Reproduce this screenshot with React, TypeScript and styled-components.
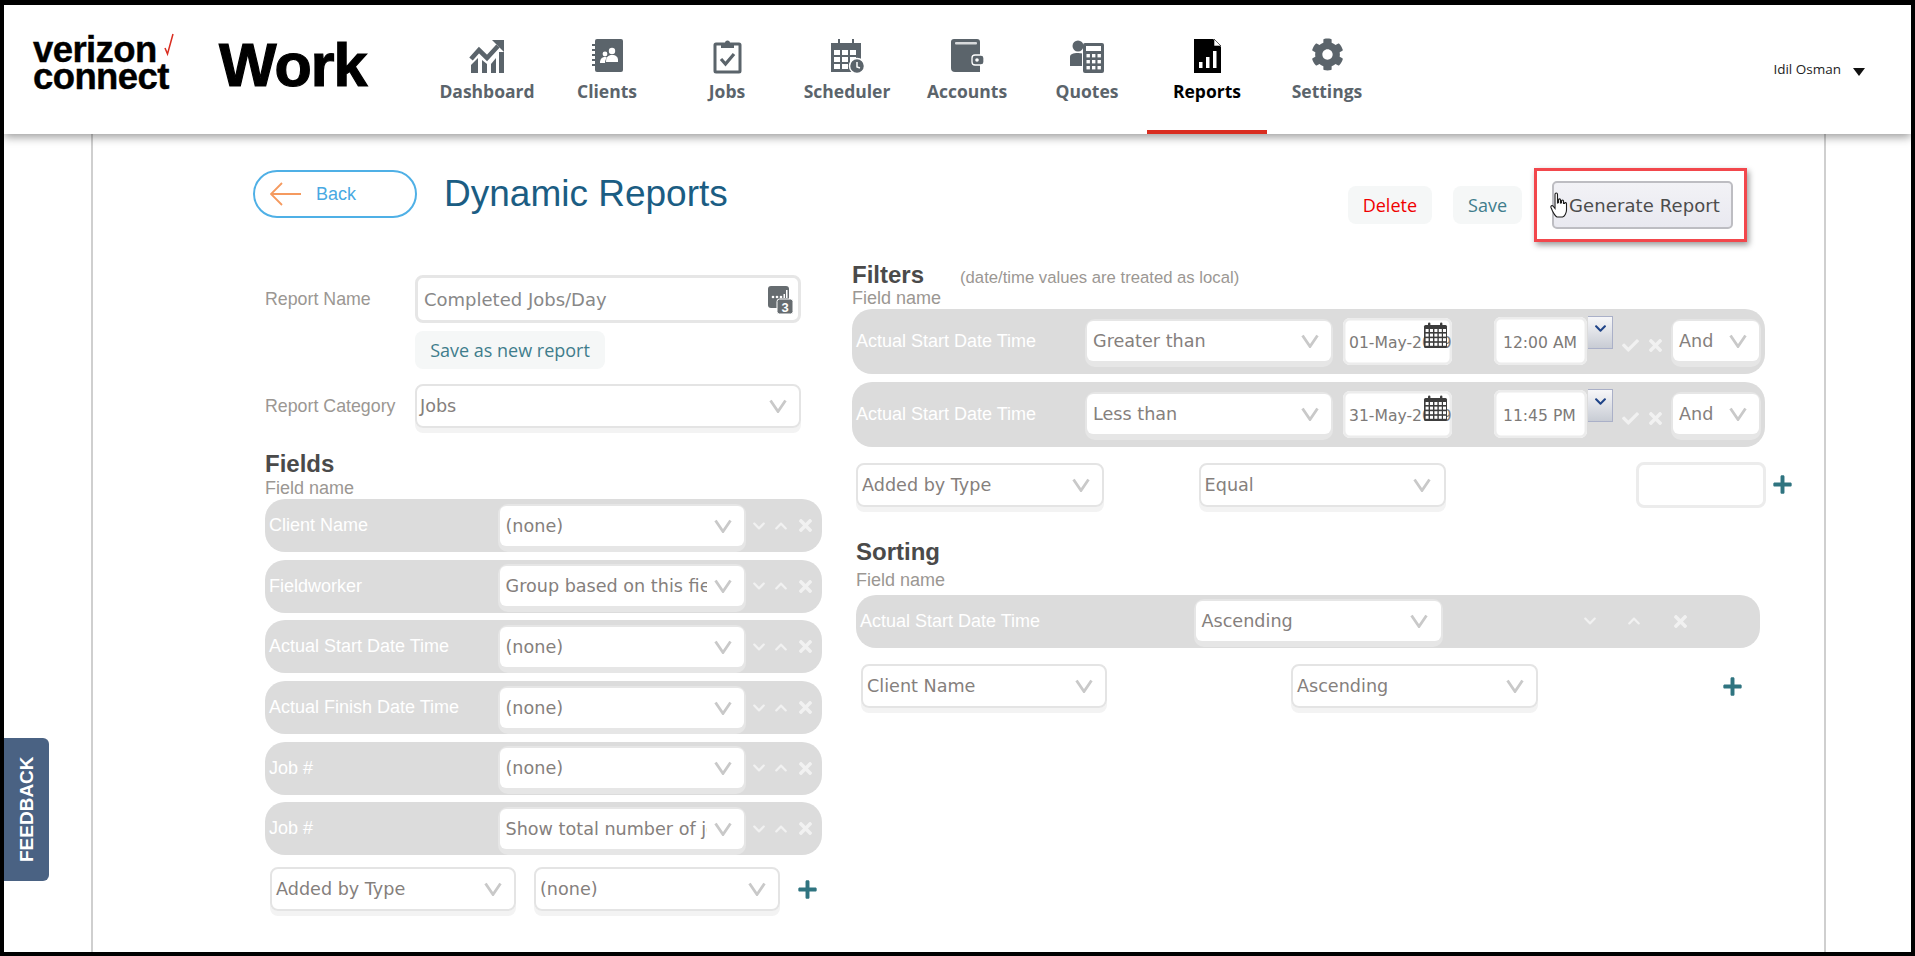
import React from "react";
import styled, { createGlobalStyle } from "styled-components";
import { FaCheck, FaChevronDown, FaChevronUp, FaCog, FaPlus, FaTimes } from "react-icons/fa";

const GlobalStyle = createGlobalStyle`
  html, body {
    margin: 0;
    padding: 0;
    background: #000;
  }
  * {
    box-sizing: border-box;
  }
`;

const SANS = `"Liberation Sans", Arial, sans-serif`;
const VERDANA = `"DejaVu Sans", Verdana, sans-serif`;
const OPEN = `"Open Sans", "Noto Sans", sans-serif`;

const Frame = styled.div`
  width: 1915px;
  height: 956px;
  padding: 5px 4px 4px;
  background: #000;
  display: flex;
  flex-direction: column;
  overflow: hidden;
  font-family: ${SANS};
`;

const Header = styled.header`
  position: relative;
  z-index: 2;
  height: 129px;
  flex: none;
  display: flex;
  padding-left: 29px;
  background: #fff;
  box-shadow: 0 3px 9px rgba(0, 0, 0, 0.4);
`;

const Logo = styled.div`
  width: 394px;
  flex: none;
  display: flex;
  align-items: flex-start;
  padding-top: 31px;
  color: #000;
`;

const BrandStack = styled.div`
  position: relative;
  width: 186px;
  font-size: 36.5px;
  font-weight: 700;
  line-height: 27px;
  letter-spacing: -0.6px;
  -webkit-text-stroke: 0.4px #000;
`;

const BrandCheck = styled.svg`
  position: absolute;
  left: 131px;
  top: -3px;
`;

const Work = styled.div`
  font-size: 61px;
  font-weight: 700;
  line-height: 58px;
  letter-spacing: -1px;
  -webkit-text-stroke: 1.2px #000;
`;

const Nav = styled.nav`
  display: flex;
`;

const NavItem = styled.a<{ $active?: boolean }>`
  width: 120px;
  height: 129px;
  display: flex;
  flex-direction: column;
  align-items: center;
  padding-top: 33px;
  border-bottom: 4px solid ${(p) => (p.$active ? "#d92d20" : "transparent")};
  color: ${(p) => (p.$active ? "#000" : "#5b646b")};
  font-family: ${OPEN};
  font-size: 17.5px;
  font-weight: 700;
  line-height: 24px;
`;

const NavIcon = styled.svg`
  width: 36px;
  height: 36px;
  margin-bottom: 5px;
  flex: none;
`;

const GearBox = styled.span`
  height: 36px;
  margin-bottom: 5px;
  font-size: 33px;
  line-height: 0;
`;

const UserMenu = styled.div`
  margin-left: auto;
  margin-right: 46px;
  padding-top: 54px;
  display: flex;
  align-items: flex-start;
  gap: 12px;
  font-family: ${OPEN};
  font-size: 13.5px;
  line-height: 20px;
  color: #222;
`;

const UserCaret = styled.span`
  width: 0;
  height: 0;
  margin-top: 9px;
  border-left: 6px solid transparent;
  border-right: 6px solid transparent;
  border-top: 8px solid #111;
`;

const Body = styled.main`
  position: relative;
  flex: 1;
  background: #fff;
  padding-left: 87px;
`;

const FeedbackTab = styled.div`
  position: absolute;
  left: 0;
  top: 604px;
  width: 45px;
  height: 143px;
  display: flex;
  align-items: center;
  justify-content: center;
  background: #4a6283;
  border-radius: 0 6px 6px 0;
  color: #fff;
  font-size: 19px;
  font-weight: 700;
  writing-mode: vertical-rl;
  transform: rotate(180deg);
  border-radius: 6px 0 0 6px;
`;

const Panel = styled.div`
  width: 1735px;
  height: 100%;
  border-left: 2px solid #cfcfcf;
  border-right: 2px solid #cfcfcf;
`;

const TopBar = styled.div`
  height: 108px;
  padding: 34px 77px 0 160px;
  display: flex;
  align-items: flex-start;
`;

const BackButton = styled.button`
  width: 164px;
  height: 48px;
  margin-top: 2px;
  padding: 0 0 0 15px;
  display: flex;
  align-items: center;
  gap: 15px;
  background: #fff;
  border: 2px solid #4fb0e6;
  border-radius: 24px;
  color: #48a9e2;
  font-family: ${SANS};
  font-size: 18px;
`;

const Title = styled.h1`
  margin: 0 0 0 27px;
  color: #1b5d83;
  font-size: 37px;
  font-weight: 400;
  line-height: 52px;
`;

const Actions = styled.div`
  margin-left: auto;
  display: flex;
  align-items: flex-start;
`;

const SoftButton = styled.button<{ $danger?: boolean }>`
  height: 38px;
  margin-top: 18px;
  margin-right: 21px;
  padding: 0 15px;
  border: 0;
  border-radius: 8px;
  background: #f5f7f7;
  color: ${(p) => (p.$danger ? "#f00000" : "#3f7d8c")};
  font-family: ${OPEN};
  font-size: 18px;
`;

const Highlight = styled.div`
  position: relative;
  width: 213px;
  height: 74px;
  margin-left: -9px;
  padding: 10px 0 0 15px;
  border: 3px solid #f2474c;
  box-shadow: 2px 3px 6px rgba(0, 0, 0, 0.4);
  background: #fff;
`;

const GenerateButton = styled.button`
  width: 181px;
  height: 48px;
  padding: 0 0 0 15px;
  text-align: left;
  border: 2px solid #bdbdc2;
  border-radius: 5px;
  background: linear-gradient(#f2f2f6, #e9e9f0);
  color: #4c4c4c;
  font-family: ${VERDANA};
  font-size: 18px;
  letter-spacing: 0.1px;
`;

const HandCursor = styled.svg`
  position: absolute;
  left: 13px;
  top: 21px;
`;

const Columns = styled.div`
  display: flex;
  padding-left: 172px;
  gap: 30px;
`;

const LeftColumn = styled.section`
  width: 557px;
  padding-top: 33px;
`;

const RightColumn = styled.section`
  width: 913px;
  padding-top: 18.6px;
`;

const FormRow = styled.div`
  display: flex;
  align-items: center;
`;

const FormLabel = styled.label`
  width: 150px;
  flex: none;
  color: #9b9793;
  font-size: 17.8px;
`;

const NameInput = styled.div`
  position: relative;
  width: 386px;
  height: 48px;
  padding-left: 6px;
  display: flex;
  align-items: center;
  border: 3px solid #e6e6e6;
  border-radius: 8px;
  color: #888;
  font-family: ${VERDANA};
  font-size: 18px;
`;

const CounterIcon = styled.svg`
  position: absolute;
  right: 5px;
  top: 8px;
`;

const SaveNew = styled.button`
  display: block;
  width: 190px;
  height: 38px;
  margin: 8px 0 15px 150px;
  padding: 0;
  border: 0;
  border-radius: 8px;
  background: #f5f7f7;
  color: #3f7d8c;
  font-family: ${OPEN};
  font-size: 18px;
`;

const Heading = styled.h2`
  margin: 0;
  color: #4a4a4a;
  font-size: 24px;
  font-weight: 700;
  line-height: 28px;
`;

const FieldsHeading = styled(Heading)`
  margin-top: 22px;
`;

const FieldCaption = styled.div`
  color: #9b9793;
  font-size: 18px;
  line-height: 20px;
`;

const RowList = styled.div<{ $gap: number; $top: number }>`
  display: flex;
  flex-direction: column;
  gap: ${(p) => p.$gap}px;
  margin-top: ${(p) => p.$top}px;
`;

const GreyRow = styled.div<{ $height: number }>`
  height: ${(p) => p.$height}px;
  display: flex;
  align-items: center;
  background: #dcdcdc;
  border-radius: 20px;
  padding-left: 4px;
`;

const RowLabel = styled.span<{ $width: number }>`
  width: ${(p) => p.$width}px;
  flex: none;
  color: #fff;
  font-size: 18px;
`;

const SelectBox = styled.div<{ $width: number; $inRow?: boolean }>`
  position: relative;
  width: ${(p) => p.$width}px;
  height: ${(p) => (p.$inRow ? 40 : 44)}px;
  flex: none;
  padding-left: ${(p) => (p.$inRow ? 6 : 4)}px;
  display: flex;
  align-items: center;
  overflow: hidden;
  white-space: nowrap;
  background: #fff;
  border: ${(p) => (p.$inRow ? "0" : "2.5px solid #e4e4e4")};
  border-radius: ${(p) => (p.$inRow ? 6 : 8)}px;
  color: #85807d;
  font-family: ${VERDANA};
  font-size: 17.6px;
`;

const SelectShadow = styled.div<{ $inRow?: boolean }>`
  flex: none;
  border-radius: 8px;
  box-shadow: ${(p) =>
    p.$inRow
      ? "0 0 0 2px #e6e6e6, 0 4px 0 2px #e6e6e6"
      : "0 5px 0 0 #f3f3f3"};
`;

const ChevronSlot = styled.span`
  position: absolute;
  right: 6px;
  top: 0;
  bottom: 0;
  width: 31px;
  display: flex;
  align-items: center;
  justify-content: center;
  background: #fff;
`;

const CategorySelect = styled(SelectBox)`
  padding-left: 3px;
`;

const RowTools = styled.div<{ $spread?: boolean }>`
  display: flex;
  align-items: center;
  color: #f1f1f1;
  gap: ${(p) => (p.$spread ? 30 : 8)}px;
  margin-left: ${(p) => (p.$spread ? 142 : 8)}px;
  font-size: 14px;
`;

const CloseIcon = styled(FaTimes)`
  font-size: 19px;
`;

const AddRow = styled.div<{ $pad: number; $gap: number; $top: number }>`
  display: flex;
  align-items: center;
  padding-left: ${(p) => p.$pad}px;
  gap: ${(p) => p.$gap}px;
  margin-top: ${(p) => p.$top}px;
`;

const AddIcon = styled(FaPlus)<{ $shift?: number }>`
  flex: none;
  color: #2f7480;
  font-size: 21px;
  margin-left: ${(p) => p.$shift ?? 0}px;
`;

const HeadingRow = styled.div`
  display: flex;
  align-items: baseline;
  gap: 36px;
`;

const HeadingNote = styled.span`
  color: #9b9793;
  font-size: 16.7px;
`;

const FilterCaption = styled(FieldCaption)`
  margin-top: -1px;
`;

const DateField = styled.div`
  position: relative;
  width: 109px;
  height: 47px;
  flex: none;
  margin-left: 12px;
  padding: 4px 0 0 6px;
  display: flex;
  align-items: center;
  overflow: hidden;
  white-space: nowrap;
  background: #fff;
  border-radius: 7px;
  box-shadow: inset 0 0 0 2.5px #ececec;
  color: #7d7a78;
  font-family: ${VERDANA};
  font-size: 15.6px;
`;

const DateIcon = styled.svg`
  position: absolute;
  left: 80px;
  top: 4px;
`;

const TimeField = styled(DateField)`
  width: 93px;
  height: 48px;
  margin-left: 42px;
  padding-left: 9px;
  font-size: 15.6px;
`;

const TimeButton = styled.span`
  width: 25px;
  height: 33px;
  flex: none;
  align-self: flex-start;
  margin: 7px 0 0 1px;
  display: flex;
  justify-content: center;
  padding-top: 5px;
  border: 1px solid #aab0c8;
  border-left: 0;
  background: linear-gradient(#f7f7f9, #c8ccd4);
  color: #1f4488;
  font-size: 13px;
`;

const ConfirmTools = styled.div`
  display: flex;
  align-items: center;
  gap: 7px;
  margin: 9px 8px 0 9px;
  color: #f1f1f1;
  font-size: 17px;
`;

const BlankInput = styled.div`
  width: 130px;
  height: 46px;
  flex: none;
  margin-left: 96px;
  background: #fff;
  border: 3px solid #ececec;
  border-radius: 8px;
`;

const SortingHeading = styled(Heading)`
  margin: 30px 0 0 4px;
`;

const SortCaption = styled(FieldCaption)`
  margin: 4px 0 0 4px;
`;

const SortRow = styled(GreyRow)`
  width: 904px;
  margin: 5px 0 0 4px;
`;

const CalendarGlyph = () => (
  <DateIcon width="25" height="27" viewBox="0 0 25 27" aria-hidden>
    <rect x="1" y="3" width="23" height="23" rx="1.5" fill="#3c3c3c" />
    <g fill="#fff">
      {[7, 11.6, 16.2, 20.8].map((y) =>
        [2.6, 7, 11.4, 15.8, 20].map((x) => <rect key={`${x}-${y}`} x={x} y={y} width="3" height="3" />)
      )}
    </g>
    <rect x="5" y="0.5" width="2.4" height="5" rx="1.2" fill="#3c3c3c" />
    <rect x="17" y="0.5" width="2.4" height="5" rx="1.2" fill="#3c3c3c" />
  </DateIcon>
);

const Chevron = () => (
  <svg width="18" height="14" viewBox="0 0 18 14" aria-hidden>
    <polyline points="1.5,1.5 9,12.5 16.5,1.5" fill="none" stroke="#c9c9c9" strokeWidth="2.8" />
  </svg>
);

const Select = ({ value, width, inRow }: { value: string; width: number; inRow?: boolean }) => (
  <SelectShadow $inRow={inRow}>
    <SelectBox $width={width} $inRow={inRow}>
      {value}
      <ChevronSlot>
        <Chevron />
      </ChevronSlot>
    </SelectBox>
  </SelectShadow>
);

const ICON = "#5b646b";

const DashboardIcon = () => (
  <NavIcon viewBox="0 0 36 36" fill={ICON} aria-hidden>
    <polyline points="2,21 10,12 18,20 29,8" fill="none" stroke={ICON} strokeWidth="4.6" />
    <polygon points="23,2 35,2 35,14" />
    <polygon points="2,27 9,20 9,35 2,35" />
    <polygon points="13,22 18,26 18,35 13,35" />
    <polygon points="22,26 27,20 27,35 22,35" />
    <rect x="30" y="14" width="5" height="21" />
  </NavIcon>
);

const ClientsIcon = () => (
  <NavIcon viewBox="0 0 36 36" fill={ICON} aria-hidden>
    <rect x="6" y="1" width="28" height="33" rx="2" />
    {[6, 11, 16, 21, 26].map((y) => (
      <rect key={y} x="3" y={y} width="5" height="2" />
    ))}
    <g fill="#fff">
      <circle cx="23" cy="13" r="3.2" />
      <path d="M17 24c0-5 2-7 6-7s6 2 6 5v2z" />
      <circle cx="16" cy="16" r="2.4" />
      <path d="M11 25c0-4 2-6 5-6 1 0 1.500.3 2 .6-1 1.400-2 3-2 5.400z" />
    </g>
  </NavIcon>
);

const JobsIcon = () => (
  <NavIcon viewBox="0 0 36 36" fill={ICON} aria-hidden>
    <rect x="6" y="6" width="25" height="28" rx="1" fill="none" stroke={ICON} strokeWidth="3" />
    <path d="M12 5h4a2.500 2.500 0 0 1 5 0h4v5H12z" />
    <polyline points="12,21 16.500,26 25,16" fill="none" stroke={ICON} strokeWidth="3.2" />
  </NavIcon>
);

const SchedulerIcon = () => (
  <NavIcon viewBox="0 0 36 36" fill={ICON} aria-hidden>
    <rect x="2" y="5" width="30" height="29" />
    <g fill="#fff">
      {[12, 19, 26].map((y) =>
        [5, 13, 21].map((x) =>
          x === 21 && y === 26 ? null : <rect key={`${x}-${y}`} x={x} y={y} width="6" height="5" />
        )
      )}
    </g>
    <rect x="9" y="1" width="2" height="7" />
    <rect x="23" y="1" width="2" height="7" />
    <circle cx="28" cy="28" r="7.500" stroke="#fff" strokeWidth="1.500" />
    <polyline points="28,24 28,29 31,30" fill="none" stroke="#fff" strokeWidth="1.500" />
  </NavIcon>
);

const AccountsIcon = () => (
  <NavIcon viewBox="0 0 36 36" fill={ICON} aria-hidden>
    <path d="M5 1h23a3 3 0 0 1 3 3v30H6a4 4 0 0 1-4-4V4a3 3 0 0 1 3-3z" />
    <rect x="6" y="4" width="22" height="2.500" rx="1" fill="#d8dadc" />
    <rect x="23" y="17" width="12" height="10" rx="3" fill={ICON} stroke="#fff" strokeWidth="1.300" />
    <circle cx="28" cy="22" r="1.800" fill="#fff" />
  </NavIcon>
);

const QuotesIcon = () => (
  <NavIcon viewBox="0 0 36 36" fill={ICON} aria-hidden>
    <circle cx="9" cy="8" r="5.500" />
    <path d="M1 19c0-3 3-4 8-4 1 0 3 .2 4 .5V28H1z" />
    <rect x="14" y="5" width="21" height="30" rx="2" />
    <rect x="17" y="8" width="15" height="5" fill="#fff" />
    <g fill="#fff">
      {[16, 22, 28].map((y) =>
        [17.5, 23, 28.5].map((x) => <rect key={`${x}-${y}`} x={x} y={y} width="3.400" height="3.400" />)
      )}
    </g>
  </NavIcon>
);

const ReportsIcon = () => (
  <NavIcon viewBox="0 0 36 36" aria-hidden>
    <path d="M5 1h19l8 8v26H5z" fill="#000" />
    <path d="M25 1l7 7h-7z" fill="#fff" stroke="#000" strokeWidth="0.600" />
    <g fill="#fff">
      <rect x="10" y="24" width="3.500" height="6" />
      <rect x="17" y="19" width="3.500" height="11" />
      <rect x="24" y="13" width="3.500" height="17" />
    </g>
  </NavIcon>
);

const NAV = [
  { label: "Dashboard", icon: <DashboardIcon /> },
  { label: "Clients", icon: <ClientsIcon /> },
  { label: "Jobs", icon: <JobsIcon /> },
  { label: "Scheduler", icon: <SchedulerIcon /> },
  { label: "Accounts", icon: <AccountsIcon /> },
  { label: "Quotes", icon: <QuotesIcon /> },
  { label: "Reports", icon: <ReportsIcon />, active: true },
  { label: "Settings", icon: <GearBox><FaCog /></GearBox> },
];

const FIELDS = [
  { name: "Client Name", value: "(none)" },
  { name: "Fieldworker", value: "Group based on this field" },
  { name: "Actual Start Date Time", value: "(none)" },
  { name: "Actual Finish Date Time", value: "(none)" },
  { name: "Job #", value: "(none)" },
  { name: "Job #", value: "Show total number of jobs" },
];

const FILTERS = [
  { op: "Greater than", date: "01-May-2019", time: "12:00 AM" },
  { op: "Less than", date: "31-May-2019", time: "11:45 PM" },
];

export default function App() {
  return (
    <Frame>
      <GlobalStyle />
      <Header>
        <Logo>
          <BrandStack>
            <BrandCheck width="10" height="24" viewBox="0 0 10 24" aria-hidden>
              <polyline points="1,15 3.500,21 9,1" fill="none" stroke="#d92d20" strokeWidth="1.500" />
            </BrandCheck>
            verizon
            <br />
            connect
          </BrandStack>
          <Work>Work</Work>
        </Logo>
        <Nav>
          {NAV.map((item) => (
            <NavItem key={item.label} $active={item.active}>
              {item.icon}
              {item.label}
            </NavItem>
          ))}
        </Nav>
        <UserMenu>
          Idil Osman
          <UserCaret />
        </UserMenu>
      </Header>
      <Body>
        <FeedbackTab>FEEDBACK</FeedbackTab>
        <Panel>
          <TopBar>
            <BackButton>
              <svg width="31" height="24" viewBox="0 0 31 24" aria-hidden>
                <path d="M12 1L1 12l11 11M1 12h30" fill="none" stroke="#f59a5f" strokeWidth="1.800" />
              </svg>
              Back
            </BackButton>
            <Title>Dynamic Reports</Title>
            <Actions>
              <SoftButton $danger>Delete</SoftButton>
              <SoftButton>Save</SoftButton>
              <Highlight>
                <GenerateButton>Generate Report</GenerateButton>
                <HandCursor width="18" height="26" viewBox="0 0 18 26" aria-hidden>
                  <path
                    d="M5 2.500c0-2 2.500-2 2.500 0V11l1-.3V8c0-1.500 2-1.500 2 0v3l1-.2V9c0-1.300 2-1.300 2 0v2.500l1-.1c0-1.200 2-1 2 .3V18c0 3-2 6.500-4 7H7c-2-1-3-3-4.500-6L1 15.500c-.5-1.500 1-2.500 2-1.500l2 2.500z"
                    fill="#fff"
                    stroke="#1b1b1b"
                    strokeWidth="1.100"
                  />
                </HandCursor>
              </Highlight>
            </Actions>
          </TopBar>
          <Columns>
            <LeftColumn>
              <FormRow>
                <FormLabel>Report Name</FormLabel>
                <NameInput>
                  Completed Jobs/Day
                  <CounterIcon width="25" height="28" viewBox="0 0 25 28" aria-hidden>
                    <rect x="0" y="0" width="21" height="22" rx="3" fill="#666c70" />
                    <g fill="#fff">
                      <circle cx="5" cy="11" r="1.300" />
                      <circle cx="9" cy="11" r="1.300" />
                      <circle cx="13" cy="11" r="1.300" />
                      <rect x="15.500" y="8" width="1.500" height="4" />
                      <rect x="18" y="4" width="1.500" height="8" />
                    </g>
                    <rect x="9" y="13" width="16" height="15" rx="2.500" fill="#666c70" stroke="#fff" />
                    <text x="17" y="25.500" textAnchor="middle" fill="#fff" fontSize="13" fontWeight="700" fontFamily={SANS}>
                      3
                    </text>
                  </CounterIcon>
                </NameInput>
              </FormRow>
              <SaveNew>Save as new report</SaveNew>
              <FormRow>
                <FormLabel>Report Category</FormLabel>
                <SelectShadow>
                  <CategorySelect $width={386}>
                    Jobs
                    <ChevronSlot>
                      <Chevron />
                    </ChevronSlot>
                  </CategorySelect>
                </SelectShadow>
              </FormRow>
              <FieldsHeading>Fields</FieldsHeading>
              <FieldCaption>Field name</FieldCaption>
              <RowList $gap={7.6} $top={1.3}>
                {FIELDS.map((f, i) => (
                  <GreyRow key={i} $height={53}>
                    <RowLabel $width={230.5}>{f.name}</RowLabel>
                    <Select value={f.value} width={244.5} inRow />
                    <RowTools>
                      <FaChevronDown />
                      <FaChevronUp />
                      <CloseIcon />
                    </RowTools>
                  </GreyRow>
                ))}
              </RowList>
              <AddRow $pad={5} $gap={18} $top={12}>
                <Select value="Added by Type" width={246} />
                <Select value="(none)" width={246} />
                <AddIcon $shift={-1} />
              </AddRow>
            </LeftColumn>
            <RightColumn>
              <HeadingRow>
                <Heading>Filters</Heading>
                <HeadingNote>(date/time values are treated as local)</HeadingNote>
              </HeadingRow>
              <FilterCaption>Field name</FilterCaption>
              <RowList $gap={7.7} $top={1.3}>
                {FILTERS.map((f) => (
                  <GreyRow key={f.op} $height={65}>
                    <RowLabel $width={231}>Actual Start Date Time</RowLabel>
                    <Select value={f.op} width={244} inRow />
                    <DateField>
                      {f.date}
                      <CalendarGlyph />
                    </DateField>
                    <TimeField>{f.time}</TimeField>
                    <TimeButton>
                      <FaChevronDown />
                    </TimeButton>
                    <ConfirmTools>
                      <FaCheck />
                      <CloseIcon />
                    </ConfirmTools>
                    <Select value="And" width={86} inRow />
                  </GreyRow>
                ))}
              </RowList>
              <AddRow $pad={4} $gap={94.6} $top={15.3}>
                <Select value="Added by Type" width={248} />
                <Select value="Equal" width={247} />
                <BlankInput />
                <AddIcon $shift={-88.6} />
              </AddRow>
              <SortingHeading>Sorting</SortingHeading>
              <SortCaption>Field name</SortCaption>
              <SortRow $height={53}>
                <RowLabel $width={335.5}>Actual Start Date Time</RowLabel>
                <Select value="Ascending" width={245} inRow />
                <RowTools $spread>
                  <FaChevronDown />
                  <FaChevronUp />
                  <CloseIcon />
                </RowTools>
              </SortRow>
              <AddRow $pad={9} $gap={184} $top={16.3}>
                <Select value="Client Name" width={246} />
                <Select value="Ascending" width={247} />
                <AddIcon />
              </AddRow>
            </RightColumn>
          </Columns>
        </Panel>
      </Body>
    </Frame>
  );
}
